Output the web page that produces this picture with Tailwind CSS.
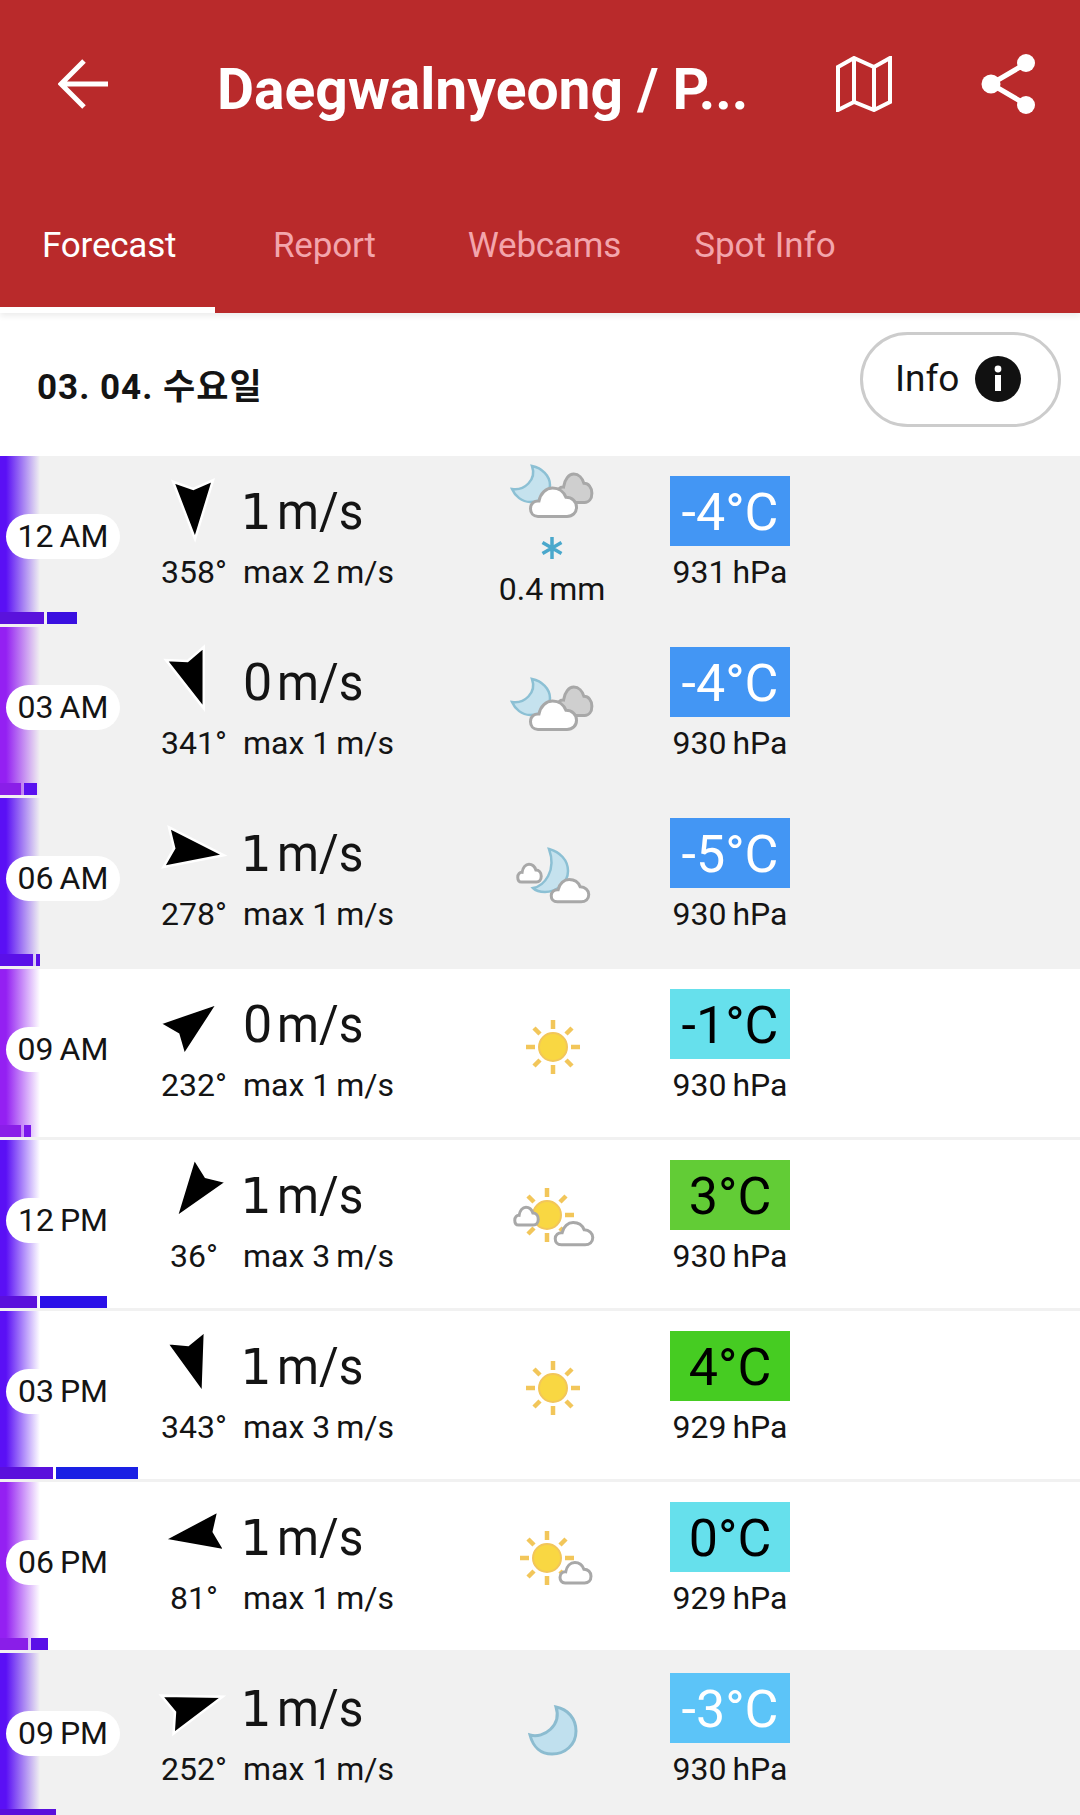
<!DOCTYPE html>
<html>
<head>
<meta charset="utf-8">
<script src="https://cdn.jsdelivr.net/npm/@tailwindcss/browser@4"></script>
</head>
<body class="m-0 bg-white font-['Roboto','Noto_Sans_CJK_KR',sans-serif] text-[#141414]">
<svg class="hidden" width="0" height="0">
  <defs>
    <symbol id="cloud" viewBox="0 0 49 31" preserveAspectRatio="none" overflow="visible"><path d="M9 29.5C4 29.5 1.5 26 1.5 22C1.5 17 5.5 14 10 14.5C11.5 7 17 2 23.5 2C30 2 35 6 37 11C43 11 47.5 15 47.5 20.5C47.5 26 43.5 29.5 38 29.5Z" stroke-width="3" vector-effect="non-scaling-stroke"/></symbol>
    <symbol id="sun" viewBox="-30 -30 60 60"><circle r="14" fill="#f9d742" stroke="#f2c65a" stroke-width="2"/><g stroke="#f2c65a" stroke-width="4.5"><path d="M0 -27V-18M0 27V18M-27 0H-18M27 0H18M-19 -19L-13 -13M19 -19L13 -13M-19 19L-13 13M19 19L13 13"/></g></symbol>
    <symbol id="arrow" viewBox="-34 -34 68 68" overflow="visible"><path d="M0 30L-20 -28L0 -20L20 -28Z" fill="#000" stroke="#fff" stroke-width="2.5" stroke-linejoin="miter"/></symbol>
  </defs>
</svg>
<div class="w-[1080px] h-[1815px] overflow-hidden">
  <header class="relative z-10 bg-[#b92a2b] h-[313px] shadow-[0_3px_6px_rgba(0,0,0,0.08)]">
    <div class="flex items-center h-[168px] text-white">
      <svg class="ml-[58px] w-[50px] h-[50px] shrink-0" viewBox="0 0 50 50" fill="none" stroke="#fff" stroke-width="5"><path d="M50 25H3M26 2L3 25L26 48"/></svg>
      <h1 class="ml-[109px] w-[560px] mt-[12px] text-[57px] leading-[70px] font-bold whitespace-nowrap">Daegwalnyeong / P...</h1>
      <svg class="ml-[59px] w-[56px] h-[56px] shrink-0" viewBox="0 0 56 56" fill="none" stroke="#fff" stroke-width="4"><path d="M2 11L18 2L38 11L54 2V46L38 54L18 46L2 54ZM18 2V46M38 11V54"/></svg>
      <svg class="ml-[89px] w-[56px] h-[62px] shrink-0" viewBox="0 0 56 62" fill="#fff" stroke="#fff"><path d="M46 10L10 31L46 52" fill="none" stroke-width="5"/><circle cx="45" cy="10" r="9" stroke="none"/><circle cx="10" cy="31" r="9.5" stroke="none"/><circle cx="45" cy="52" r="9" stroke="none"/></svg>
    </div>
    <nav class="flex h-[145px] text-[35px] tracking-[-0.2px] leading-[44px] text-[#f3a5ac]">
      <div class="w-[215px] h-[145px] pl-[42px] pt-[56px] border-b-[6px] border-white text-white">Forecast</div>
      <div class="ml-[58px] pt-[56px]">Report</div>
      <div class="ml-[92px] pt-[56px]">Webcams</div>
      <div class="ml-[73px] pt-[56px] tracking-normal">Spot Info</div>
    </nav>
  </header>

  <div class="flex items-center h-[143px] pl-[37px] pr-[19px]">
    <div class="text-[35px] font-bold tracking-[1px] mt-[8px]">03. 04. 수요일</div>
    <button class="ml-auto flex items-center w-[201px] h-[95px] pl-[32px] rounded-[48px] border-[3px] border-[#cccccc] text-[37px] mt-[-11px]">
      <span>Info</span>
      <svg class="ml-[16px] w-[46px] h-[46px]" viewBox="0 0 46 46"><circle cx="23" cy="23" r="23" fill="#111"/><rect x="20" y="19" width="6" height="16" fill="#fff"/><circle cx="23" cy="13" r="3.4" fill="#fff"/></svg>
    </button>
  </div>

  <!-- 12 AM -->
  <section class="relative flex h-[171px] bg-[#f1f1f1] border-b-[3px] border-[#f1f1f1]">
    <div class="absolute left-0 top-0 w-[40px] h-[168px] bg-gradient-to-r from-[#5a10f5] from-[15%] to-transparent"></div>
    <div class="absolute left-0 top-[156px] flex gap-[3px] h-[12px]"><div class="w-[44px] bg-[#5a12dc]"></div><div class="w-[30px] bg-[#3a10e0]"></div></div>
    <div class="relative ml-[6px] mt-[58px] w-[114px] h-[45px] rounded-full bg-white text-[32px] leading-[45px] text-center">12<span class="ml-[6px]">AM</span></div>
    <div class="ml-[30px] w-[88px] pt-[23px] text-center">
      <svg class="mx-auto w-[64px] h-[60px] rotate-[-2deg]" viewBox="-32 -30 64 60" overflow="visible"><use href="#arrow" x="-34" y="-34" width="68" height="68"/></svg>
      <div class="mt-[13px] text-[32px] leading-[40px]">358°</div>
    </div>
    <div class="ml-[5px] w-[259px] pt-[26px]">
      <div class="text-[52px] leading-[60px] whitespace-nowrap"><span class="inline-block w-[37px] -ml-[3px] font-['DejaVu_Sans'] text-[50px]">1</span><span class="inline-block origin-left scale-x-[0.92]">m/s</span></div>
      <div class="mt-[10px] text-[32px] leading-[40px]">max 2<span class="ml-[6px]">m/s</span></div>
    </div>
    <div class="w-[100px] pt-[4px]">
      <svg class="w-[100px] h-[70px] overflow-visible" viewBox="0 0 100 70"><path d="M30 6C40 8 48 16 48 25C48 36 38 42 28 42C20 42 13 36 10 29C22 31 35 20 30 6Z" fill="#c5e2ee" stroke="#8cc0d4" stroke-width="2.5"/><use href="#cloud" x="54" y="12" width="37" height="32" fill="#cfcfcf" stroke="#a8a8a8"/><use href="#cloud" x="27" y="26" width="49" height="32" fill="#fff" stroke="#a8a8a8"/></svg>
      <svg class="mx-auto mt-[6px] w-[24px] h-[24px]" viewBox="0 0 24 24" stroke="#4aa8cc" stroke-width="3.5"><path d="M12 1V23M2.5 6.5L21.5 17.5M2.5 17.5L21.5 6.5"/></svg>
      <div class="-mx-[10px] mt-[9px] text-[32px] leading-[40px] text-center whitespace-nowrap">0.4<span class="ml-[6px]">mm</span></div>
    </div>
    <div class="ml-[68px] w-[120px] pt-[20px] text-center">
      <div class="h-[70px] bg-[#4396f4] text-white text-[52px] leading-[73px]">-4°C</div>
      <div class="mt-[6px] text-[32px] leading-[40px] whitespace-nowrap">931<span class="ml-[6px]">hPa</span></div>
    </div>
  </section>

  <!-- 03 AM -->
  <section class="relative flex h-[171px] bg-[#f1f1f1] border-b-[3px] border-[#f1f1f1]">
    <div class="absolute left-0 top-0 w-[40px] h-[168px] bg-gradient-to-r from-[#9420f2] from-[15%] to-transparent"></div>
    <div class="absolute left-0 top-[156px] flex gap-[3px] h-[12px]"><div class="w-[21px] bg-[#8a1ee8]"></div><div class="w-[13px] bg-[#5a10f0]"></div></div>
    <div class="relative ml-[6px] mt-[58px] w-[114px] h-[45px] rounded-full bg-white text-[32px] leading-[45px] text-center">03<span class="ml-[6px]">AM</span></div>
    <div class="ml-[30px] w-[88px] pt-[23px] text-center">
      <svg class="mx-auto w-[64px] h-[60px] rotate-[-19deg]" viewBox="-32 -30 64 60" overflow="visible"><use href="#arrow" x="-34" y="-34" width="68" height="68"/></svg>
      <div class="mt-[13px] text-[32px] leading-[40px]">341°</div>
    </div>
    <div class="ml-[5px] w-[259px] pt-[26px]">
      <div class="text-[52px] leading-[60px] whitespace-nowrap"><span class="inline-block w-[34px]">0</span><span class="inline-block origin-left scale-x-[0.92]">m/s</span></div>
      <div class="mt-[10px] text-[32px] leading-[40px]">max 1<span class="ml-[6px]">m/s</span></div>
    </div>
    <div class="w-[100px] pt-[46px]">
      <svg class="w-[100px] h-[70px] overflow-visible" viewBox="0 0 100 70"><path d="M30 6C40 8 48 16 48 25C48 36 38 42 28 42C20 42 13 36 10 29C22 31 35 20 30 6Z" fill="#c5e2ee" stroke="#8cc0d4" stroke-width="2.5"/><use href="#cloud" x="54" y="12" width="37" height="32" fill="#cfcfcf" stroke="#a8a8a8"/><use href="#cloud" x="27" y="26" width="49" height="32" fill="#fff" stroke="#a8a8a8"/></svg>
    </div>
    <div class="ml-[68px] w-[120px] pt-[20px] text-center">
      <div class="h-[70px] bg-[#4396f4] text-white text-[52px] leading-[73px]">-4°C</div>
      <div class="mt-[6px] text-[32px] leading-[40px] whitespace-nowrap">930<span class="ml-[6px]">hPa</span></div>
    </div>
  </section>

  <!-- 06 AM -->
  <section class="relative flex h-[171px] bg-[#f1f1f1] border-b-[3px] border-[#f1f1f1]">
    <div class="absolute left-0 top-0 w-[40px] h-[168px] bg-gradient-to-r from-[#5a10f5] from-[15%] to-transparent"></div>
    <div class="absolute left-0 top-[156px] flex gap-[3px] h-[12px]"><div class="w-[33px] bg-[#5a10e8]"></div><div class="w-[4px] bg-[#5a10e8]"></div></div>
    <div class="relative ml-[6px] mt-[58px] w-[114px] h-[45px] rounded-full bg-white text-[32px] leading-[45px] text-center">06<span class="ml-[6px]">AM</span></div>
    <div class="ml-[30px] w-[88px] pt-[23px] text-center">
      <svg class="mx-auto w-[64px] h-[60px] rotate-[-82deg]" viewBox="-32 -30 64 60" overflow="visible"><use href="#arrow" x="-34" y="-34" width="68" height="68"/></svg>
      <div class="mt-[13px] text-[32px] leading-[40px]">278°</div>
    </div>
    <div class="ml-[5px] w-[259px] pt-[26px]">
      <div class="text-[52px] leading-[60px] whitespace-nowrap"><span class="inline-block w-[37px] -ml-[3px] font-['DejaVu_Sans'] text-[50px]">1</span><span class="inline-block origin-left scale-x-[0.92]">m/s</span></div>
      <div class="mt-[10px] text-[32px] leading-[40px]">max 1<span class="ml-[6px]">m/s</span></div>
    </div>
    <div class="w-[100px] pt-[46px]">
      <svg class="w-[100px] h-[70px] overflow-visible" viewBox="0 0 100 70"><path d="M47 5C58 8 66 16 66 27C66 40 53 48 43 48C38 48 33 46 31 44C42 42 55 27 47 5Z" fill="#c5e2ee" stroke="#8cc0d4" stroke-width="2.5"/><use href="#cloud" x="15" y="19" width="25" height="20" fill="#fff" stroke="#a8a8a8"/><use href="#cloud" x="48" y="34" width="40" height="25" fill="#fff" stroke="#a8a8a8"/></svg>
    </div>
    <div class="ml-[68px] w-[120px] pt-[20px] text-center">
      <div class="h-[70px] bg-[#4396f4] text-white text-[52px] leading-[73px]">-5°C</div>
      <div class="mt-[6px] text-[32px] leading-[40px] whitespace-nowrap">930<span class="ml-[6px]">hPa</span></div>
    </div>
  </section>

  <!-- 09 AM -->
  <section class="relative flex h-[171px] bg-white border-b-[3px] border-[#f1f1f1]">
    <div class="absolute left-0 top-0 w-[40px] h-[168px] bg-gradient-to-r from-[#9420f2] from-[15%] to-transparent"></div>
    <div class="absolute left-0 top-[156px] flex gap-[3px] h-[12px]"><div class="w-[21px] bg-[#8a1ee8]"></div><div class="w-[7px] bg-[#7a18ec]"></div></div>
    <div class="relative ml-[6px] mt-[58px] w-[114px] h-[45px] rounded-full bg-white text-[32px] leading-[45px] text-center">09<span class="ml-[6px]">AM</span></div>
    <div class="ml-[30px] w-[88px] pt-[23px] text-center">
      <svg class="mx-auto w-[64px] h-[60px] rotate-[-128deg]" viewBox="-32 -30 64 60" overflow="visible"><use href="#arrow" x="-34" y="-34" width="68" height="68"/></svg>
      <div class="mt-[13px] text-[32px] leading-[40px]">232°</div>
    </div>
    <div class="ml-[5px] w-[259px] pt-[26px]">
      <div class="text-[52px] leading-[60px] whitespace-nowrap"><span class="inline-block w-[34px]">0</span><span class="inline-block origin-left scale-x-[0.92]">m/s</span></div>
      <div class="mt-[10px] text-[32px] leading-[40px]">max 1<span class="ml-[6px]">m/s</span></div>
    </div>
    <div class="w-[100px] pt-[46px]">
      <svg class="w-[100px] h-[70px] overflow-visible" viewBox="0 0 100 70"><use href="#sun" x="21" y="2" width="60" height="60"/></svg>
    </div>
    <div class="ml-[68px] w-[120px] pt-[20px] text-center">
      <div class="h-[70px] bg-[#66e0ec] text-black text-[52px] leading-[73px]">-1°C</div>
      <div class="mt-[6px] text-[32px] leading-[40px] whitespace-nowrap">930<span class="ml-[6px]">hPa</span></div>
    </div>
  </section>

  <!-- 12 PM -->
  <section class="relative flex h-[171px] bg-white border-b-[3px] border-[#f1f1f1]">
    <div class="absolute left-0 top-0 w-[40px] h-[168px] bg-gradient-to-r from-[#5a10f5] from-[15%] to-transparent"></div>
    <div class="absolute left-0 top-[156px] flex gap-[3px] h-[12px]"><div class="w-[37px] bg-[#5a10dc]"></div><div class="w-[67px] bg-[#2a10e8]"></div></div>
    <div class="relative ml-[6px] mt-[58px] w-[114px] h-[45px] rounded-full bg-white text-[32px] leading-[45px] text-center">12<span class="ml-[6px]">PM</span></div>
    <div class="ml-[30px] w-[88px] pt-[23px] text-center">
      <svg class="mx-auto w-[64px] h-[60px] rotate-[36deg]" viewBox="-32 -30 64 60" overflow="visible"><use href="#arrow" x="-34" y="-34" width="68" height="68"/></svg>
      <div class="mt-[13px] text-[32px] leading-[40px]">36°</div>
    </div>
    <div class="ml-[5px] w-[259px] pt-[26px]">
      <div class="text-[52px] leading-[60px] whitespace-nowrap"><span class="inline-block w-[37px] -ml-[3px] font-['DejaVu_Sans'] text-[50px]">1</span><span class="inline-block origin-left scale-x-[0.92]">m/s</span></div>
      <div class="mt-[10px] text-[32px] leading-[40px]">max 3<span class="ml-[6px]">m/s</span></div>
    </div>
    <div class="w-[100px] pt-[46px]">
      <svg class="w-[100px] h-[70px] overflow-visible" viewBox="0 0 100 70"><use href="#sun" x="15" y="-1" width="60" height="60"/><use href="#cloud" x="12" y="20" width="25" height="20" fill="#fff" stroke="#a8a8a8"/><use href="#cloud" x="52" y="35" width="40" height="25" fill="#fff" stroke="#a8a8a8"/></svg>
    </div>
    <div class="ml-[68px] w-[120px] pt-[20px] text-center">
      <div class="h-[70px] bg-[#62cc36] text-black text-[52px] leading-[73px]">3°C</div>
      <div class="mt-[6px] text-[32px] leading-[40px] whitespace-nowrap">930<span class="ml-[6px]">hPa</span></div>
    </div>
  </section>

  <!-- 03 PM -->
  <section class="relative flex h-[171px] bg-white border-b-[3px] border-[#f1f1f1]">
    <div class="absolute left-0 top-0 w-[40px] h-[168px] bg-gradient-to-r from-[#5a10f5] from-[15%] to-transparent"></div>
    <div class="absolute left-0 top-[156px] flex gap-[3px] h-[12px]"><div class="w-[53px] bg-[#5a10dc]"></div><div class="w-[82px] bg-[#1a20e4]"></div></div>
    <div class="relative ml-[6px] mt-[58px] w-[114px] h-[45px] rounded-full bg-white text-[32px] leading-[45px] text-center">03<span class="ml-[6px]">PM</span></div>
    <div class="ml-[30px] w-[88px] pt-[23px] text-center">
      <svg class="mx-auto w-[64px] h-[60px] rotate-[-17deg]" viewBox="-32 -30 64 60" overflow="visible"><use href="#arrow" x="-34" y="-34" width="68" height="68"/></svg>
      <div class="mt-[13px] text-[32px] leading-[40px]">343°</div>
    </div>
    <div class="ml-[5px] w-[259px] pt-[26px]">
      <div class="text-[52px] leading-[60px] whitespace-nowrap"><span class="inline-block w-[37px] -ml-[3px] font-['DejaVu_Sans'] text-[50px]">1</span><span class="inline-block origin-left scale-x-[0.92]">m/s</span></div>
      <div class="mt-[10px] text-[32px] leading-[40px]">max 3<span class="ml-[6px]">m/s</span></div>
    </div>
    <div class="w-[100px] pt-[46px]">
      <svg class="w-[100px] h-[70px] overflow-visible" viewBox="0 0 100 70"><use href="#sun" x="21" y="1" width="60" height="60"/></svg>
    </div>
    <div class="ml-[68px] w-[120px] pt-[20px] text-center">
      <div class="h-[70px] bg-[#46cc22] text-black text-[52px] leading-[73px]">4°C</div>
      <div class="mt-[6px] text-[32px] leading-[40px] whitespace-nowrap">929<span class="ml-[6px]">hPa</span></div>
    </div>
  </section>

  <!-- 06 PM -->
  <section class="relative flex h-[171px] bg-white border-b-[3px] border-[#f1f1f1]">
    <div class="absolute left-0 top-0 w-[40px] h-[168px] bg-gradient-to-r from-[#9420f2] from-[15%] to-transparent"></div>
    <div class="absolute left-0 top-[156px] flex gap-[3px] h-[12px]"><div class="w-[28px] bg-[#8a1ee8]"></div><div class="w-[17px] bg-[#5a10e8]"></div></div>
    <div class="relative ml-[6px] mt-[58px] w-[114px] h-[45px] rounded-full bg-white text-[32px] leading-[45px] text-center">06<span class="ml-[6px]">PM</span></div>
    <div class="ml-[30px] w-[88px] pt-[23px] text-center">
      <svg class="mx-auto w-[64px] h-[60px] rotate-[81deg]" viewBox="-32 -30 64 60" overflow="visible"><use href="#arrow" x="-34" y="-34" width="68" height="68"/></svg>
      <div class="mt-[13px] text-[32px] leading-[40px]">81°</div>
    </div>
    <div class="ml-[5px] w-[259px] pt-[26px]">
      <div class="text-[52px] leading-[60px] whitespace-nowrap"><span class="inline-block w-[37px] -ml-[3px] font-['DejaVu_Sans'] text-[50px]">1</span><span class="inline-block origin-left scale-x-[0.92]">m/s</span></div>
      <div class="mt-[10px] text-[32px] leading-[40px]">max 1<span class="ml-[6px]">m/s</span></div>
    </div>
    <div class="w-[100px] pt-[46px]">
      <svg class="w-[100px] h-[70px] overflow-visible" viewBox="0 0 100 70"><use href="#sun" x="15" y="0" width="60" height="60"/><use href="#cloud" x="57" y="33" width="33" height="23" fill="#fff" stroke="#a8a8a8"/></svg>
    </div>
    <div class="ml-[68px] w-[120px] pt-[20px] text-center">
      <div class="h-[70px] bg-[#66e0ec] text-black text-[52px] leading-[73px]">0°C</div>
      <div class="mt-[6px] text-[32px] leading-[40px] whitespace-nowrap">929<span class="ml-[6px]">hPa</span></div>
    </div>
  </section>

  <!-- 09 PM -->
  <section class="relative flex h-[171px] bg-[#f1f1f1] border-b-[3px] border-[#f1f1f1]">
    <div class="absolute left-0 top-0 w-[40px] h-[168px] bg-gradient-to-r from-[#5a10f5] from-[15%] to-transparent"></div>
    <div class="absolute left-0 top-[156px] flex gap-[3px] h-[12px]"><div class="w-[56px] bg-[#5a10dc]"></div></div>
    <div class="relative ml-[6px] mt-[58px] w-[114px] h-[45px] rounded-full bg-white text-[32px] leading-[45px] text-center">09<span class="ml-[6px]">PM</span></div>
    <div class="ml-[30px] w-[88px] pt-[23px] text-center">
      <svg class="mx-auto w-[64px] h-[60px] rotate-[-108deg]" viewBox="-32 -30 64 60" overflow="visible"><use href="#arrow" x="-34" y="-34" width="68" height="68"/></svg>
      <div class="mt-[13px] text-[32px] leading-[40px]">252°</div>
    </div>
    <div class="ml-[5px] w-[259px] pt-[26px]">
      <div class="text-[52px] leading-[60px] whitespace-nowrap"><span class="inline-block w-[37px] -ml-[3px] font-['DejaVu_Sans'] text-[50px]">1</span><span class="inline-block origin-left scale-x-[0.92]">m/s</span></div>
      <div class="mt-[10px] text-[32px] leading-[40px]">max 1<span class="ml-[6px]">m/s</span></div>
    </div>
    <div class="w-[100px] pt-[46px]">
      <svg class="w-[100px] h-[70px] overflow-visible" viewBox="0 0 100 70"><path d="M54 8C66 10 74 20 74 32C74 46 63 55 50 55C39 55 31 48 28 36C42 40 60 26 54 8Z" fill="#c0e0ee" stroke="#8cbcd0" stroke-width="3"/></svg>
    </div>
    <div class="ml-[68px] w-[120px] pt-[20px] text-center">
      <div class="h-[70px] bg-[#5cc4f8] text-white text-[52px] leading-[73px]">-3°C</div>
      <div class="mt-[6px] text-[32px] leading-[40px] whitespace-nowrap">930<span class="ml-[6px]">hPa</span></div>
    </div>
  </section>
</div>
</body>
</html>
